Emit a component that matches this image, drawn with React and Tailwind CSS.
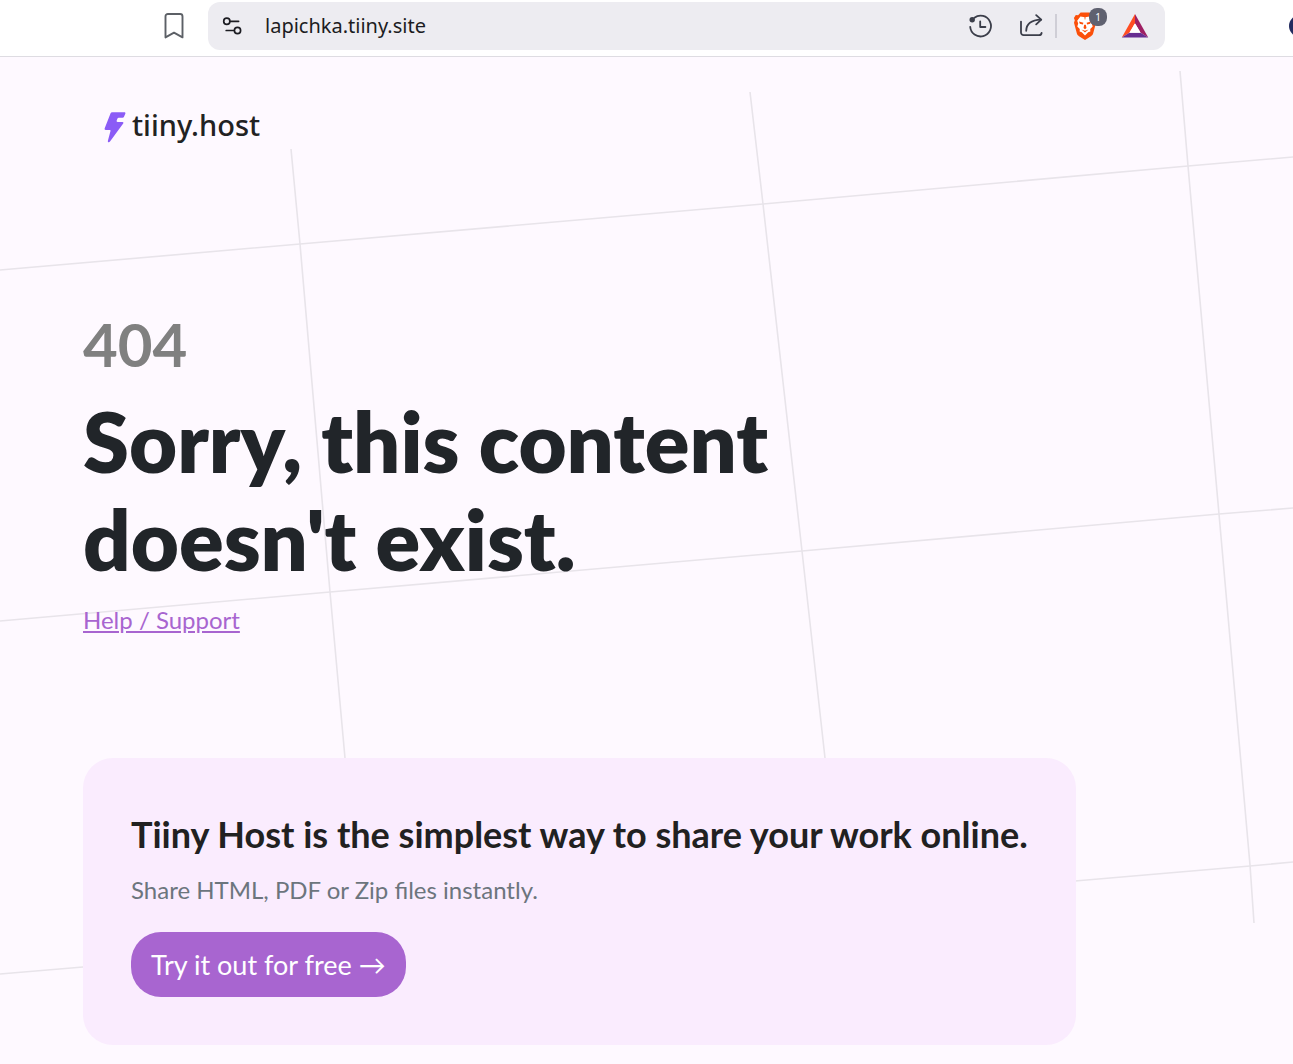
import { useState } from 'react';

const GRID_LINES = [
  '291,92 300,187 330,535 345,701 365,920',
  '750,35 763,147 802,494 825,701 850,920',
  '1180,14 1188,109 1219,457 1250,808 1254,866',
  '0,213 300,187 763,147 1188,109 1293,100',
  '0,564 330,535 802,494 1219,457 1293,451',
  '0,917 83,910 1075,824 1250,809 1293,805',
];

function BookmarkIcon() {
  return (
    <svg viewBox="0 0 20 26" className="h-[26px] w-5" fill="none" stroke="#5c6066" strokeWidth="1.9" strokeLinejoin="round">
      <path d="M1.5 3.4a2.4 2.4 0 0 1 2.4-2.4h12.2a2.4 2.4 0 0 1 2.4 2.4V24.4L10 19.6 1.5 24.4Z" />
    </svg>
  );
}

function TuneIcon() {
  return (
    <svg viewBox="0 0 20 18" className="h-[18px] w-5" fill="none" stroke="#1c1c22" strokeWidth="1.7" strokeLinecap="round">
      <circle cx="4.8" cy="4.3" r="3.1" />
      <path d="M8.6 4.3h8" />
      <circle cx="15.5" cy="13.5" r="3.1" />
      <path d="M4.200 13.5h7.6" />
    </svg>
  );
}

function HistoryIcon() {
  return (
    <svg viewBox="0 0 24 24" className="size-6" fill="none" stroke="#3b3e4a" strokeWidth="1.8" strokeLinecap="round" strokeLinejoin="round">
      <path d="M6.4 3.7A10.400 10.400 0 1 1 2.200 12.800" />
      <circle cx="4.2" cy="5.8" r="2.7" fill="#3b3e4a" stroke="none" />
      <path d="M12.2 7.4v5.600h5.2" />
    </svg>
  );
}

function ShareIcon() {
  return (
    <svg viewBox="0 0 24 24" className="size-6" fill="none" stroke="#3b3e4a" strokeWidth="1.8" strokeLinecap="round" strokeLinejoin="round">
      <path d="M2 7.6V18.600a2.600 2.600 0 0 0 2.600 2.600h15.400a2.600 2.600 0 0 0 2.600-2.200" />
      <path d="M7.2 16.800C7.400 10.200 11.800 6 22 5.700" />
      <path d="M17.2 1.2 22.200 5.700 17.2 10.400" />
    </svg>
  );
}

function ShieldIcon() {
  return (
    <svg viewBox="0 0 24 28" className="h-7 w-6">
      <path
        d="M7.600.600h8.800l2.500 2.600 2.300-.2 1.900 3-.9 2.300.8 2.500-2.800 10.500c-.4 1.400-1 2.100-2.200 3L12 28l-6-3.700c-1.200-.9-1.800-1.600-2.200-3L1 10.800l.8-2.500-.9-2.300 1.900-3 2.300.2Z"
        fill="#fb4f0a"
      />
      <path
        d="M7.400 4.500 12 5.300l4.600-.8 3.200 4.200-1 2.700.9 3-2.500 2.700.2 2.300-2.200.8L12 23.400l-3.200-3.200-2.200-.8.2-2.300-2.500-2.700.9-3-1-2.700Z"
        fill="#fff"
      />
      <path
        d="M6 9.600l4.400 1.200-.5 1.700-3.100-.7ZM18 9.600l-4.400 1.200.5 1.700 3.100-.7ZM11.200 12.800h1.600l.7 3.300L12 17.200l-1.500-1.100ZM8.400 17.500l3.600 1.200 3.600-1.200-3.600 2.900ZM11.300 5.200h1.400L12 8.200Z"
        fill="#fb4f0a"
      />
    </svg>
  );
}

function BatIcon() {
  return (
    <svg viewBox="0 0 28 26" className="h-[26px] w-7">
      <path d="M14 1 0.8 24.6 8.4 19.8 14 10.2Z" fill="#ff4d22" />
      <path d="M14 1 27.2 24.6 19.6 19.8 14 10.2Z" fill="#9e1f63" />
      <path d="M0.8 24.6H27.2L19.6 19.8H8.4Z" fill="#662d91" />
      <path d="M14 10.2 8.4 19.8H19.6Z" fill="#fff" />
    </svg>
  );
}

function Toolbar() {
  const [url, setUrl] = useState('lapichka.tiiny.site');

  return (
    <header className="flex h-[57px] shrink-0 items-start overflow-hidden border-b border-[#dedce2] bg-white pt-0.5 pl-41">
      <button type="button" aria-label="Bookmark" className="flex h-12 w-5 shrink-0 items-center">
        <BookmarkIcon />
      </button>
      <div className="ml-6 flex h-12 min-w-0 flex-1 items-center rounded-xl bg-[#edecf1] pr-4 pl-3.5">
        <button type="button" aria-label="Site settings" className="shrink-0">
          <TuneIcon />
        </button>
        <input
          type="text"
          aria-label="Address"
          value={url}
          onChange={(e) => setUrl(e.target.value)}
          className="ml-[23px] min-w-0 flex-1 bg-transparent font-['Noto_Sans',sans-serif] text-[20px] leading-7 text-[#1c1c22] outline-none"
        />
        <button type="button" aria-label="History" className="shrink-0">
          <HistoryIcon />
        </button>
        <button type="button" aria-label="Share" className="ml-[27px] shrink-0">
          <ShareIcon />
        </button>
        <span className="mr-4 ml-3 h-6 w-0.5 shrink-0 bg-[#cfced6]" />
        <button type="button" aria-label="Brave Shields" className="relative shrink-0">
          <ShieldIcon />
          <span className="absolute -top-1 left-4 flex h-[18px] w-[18px] items-center justify-center rounded-lg bg-[#5f6170] font-['Noto_Sans',sans-serif] text-[10px] leading-none text-white">
            1
          </span>
        </button>
        <button type="button" aria-label="Rewards" className="ml-6 shrink-0">
          <BatIcon />
        </button>
      </div>
      <div className="flex h-12 w-32 shrink-0 items-center pl-31">
        <span className="size-[22px] shrink-0 rounded-full bg-[#222b5f]" />
      </div>
    </header>
  );
}

function Logo() {
  return (
    <a href="#home" className="ml-5 flex w-fit items-center gap-1.5">
      <svg viewBox="-1 -5 23 36" className="h-9 w-[23px]" fill="#8b5cf6">
        <path d="M8.2 0.200H20.4c.9 0 1.3.7.9 1.5L19.9 5c-.3.6-.7.8-1.3.8h-3.9c-.6 0-1 .3-1.2.8l-.8 2c-.3.8.1 1.4.9 1.4h4.9c.9 0 1.2.8.7 1.6L6 29.6c-.9 1.3-2.5.7-2.1-.9l2.6-9.6c.2-.7-.2-1.2-.9-1.2H1.7c-.9 0-1.4-.7-1-1.6L6.600 1.300c.3-.7.8-1.100 1.600-1.100Z" />
      </svg>
      <span className="font-['Noto_Sans',sans-serif] text-[29px] leading-10 font-medium text-[#222]">tiiny.host</span>
    </a>
  );
}

export default function App() {
  return (
    <div className="flex min-h-screen flex-col font-[Lato,sans-serif]">
      <Toolbar />
      <main className="relative flex-1 overflow-hidden bg-[#fef9ff] px-[83px] pt-12 pb-4">
        <svg
          viewBox="0 0 1293 1007"
          preserveAspectRatio="xMinYMin slice"
          aria-hidden="true"
          className="absolute inset-0 size-full"
          fill="none"
          stroke="#e8e4ea"
          strokeWidth="1.6"
        >
          {GRID_LINES.map((points) => (
            <polyline key={points} points={points} />
          ))}
        </svg>

        <div className="relative">
          <Logo />

          <p className="mt-[163px] text-[60px] leading-18 font-bold text-[#808080]">404</p>
          <h1 className="mt-3 max-w-[760px] text-[83px] leading-[98px] font-extrabold text-[#212529]">
            Sorry, this content doesn't exist.
          </h1>
          <a href="#support" className="mt-3.5 inline-block text-[24px] leading-9 text-[#a865d0] underline">
            Help / Support
          </a>

          <section className="mt-30 w-fit rounded-[30px] bg-[#faecfe] p-12">
            <h2 className="text-[36px] leading-14 font-bold text-[#212121]">
              Tiiny Host is the simplest way to share your work online.
            </h2>
            <p className="mt-2.5 text-[24px] leading-9 text-[#6c757d]">Share HTML, PDF or Zip files instantly.</p>
            <button type="button" className="mt-6 h-[65px] rounded-[30px] bg-[#a865d0] px-5 text-[27px] leading-10 text-white">
              Try it out for free →
            </button>
          </section>
        </div>
      </main>
    </div>
  );
}
